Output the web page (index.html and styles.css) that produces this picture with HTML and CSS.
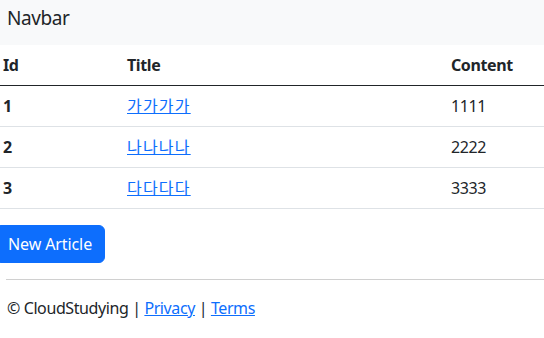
FILE: index.html
```html
<!DOCTYPE html>
<html lang="ko">
  <head>
    <meta charset="UTF-8" />
    <title>Articles</title>
    <link rel="stylesheet" href="styles.css">
  </head>
  <body>
    <header class="navbar">
      <a class="navbar-brand" href="#">Navbar</a>
    </header>

    <main class="container">
      <table class="table">
        <thead>
          <tr>
            <th class="col-id">Id</th>
            <th class="col-title">Title</th>
            <th>Content</th>
          </tr>
        </thead>
        <tbody>
          <tr>
            <th>1</th>
            <td><a class="title-link" href="#">가가가가</a></td>
            <td>1111</td>
          </tr>
          <tr>
            <th>2</th>
            <td><a class="title-link" href="#">나나나나</a></td>
            <td>2222</td>
          </tr>
          <tr>
            <th>3</th>
            <td><a class="title-link" href="#">다다다다</a></td>
            <td>3333</td>
          </tr>
        </tbody>
      </table>

      <a class="btn-primary" href="#">New Article</a>
    </main>

    <footer class="footer">
      &copy; CloudStudying | <a href="#">Privacy</a> | <a href="#">Terms</a>
    </footer>
  </body>
</html>
```

FILE: styles.css
```css
body {
  margin: 0;
  font-family: "Noto Sans", "Noto Sans CJK KR", sans-serif;
  font-size: 16px;
  line-height: 24px;
  letter-spacing: -0.4px;
  color: #212529;
  background-color: #fff;
  overflow: hidden;
}
a {
  color: #0d6efd;
}
.navbar {
  display: flex;
  align-items: flex-start;
  height: 42px;
  padding: 3px 0 0 7px;
  background-color: #f8f9fa;
}
.navbar-brand {
  font-size: 19px;
  line-height: 30px;
  color: #212529;
  text-decoration: none;
}
.container {
  margin-left: -5px;
}
.table {
  width: 549px;
  border-collapse: collapse;
  margin-bottom: 16px;
}
.table th,
.table td {
  padding: 8px;
  text-align: left;
  border-bottom: 1px solid #dee2e6;
}
.table th {
  font-weight: bold;
}
.table thead th {
  border-bottom: 1px solid #212529;
}
.col-id {
  width: 108px;
}
.col-title {
  width: 308px;
}
.title-link {
  letter-spacing: 1.2px;
}
.btn-primary {
  display: inline-block;
  padding: 6px 12px;
  border: 1px solid #0d6efd;
  border-radius: 6px;
  background-color: #0d6efd;
  color: #fff;
  text-decoration: none;
  letter-spacing: -0.1px;
  margin-bottom: 16px;
}
.footer {
  margin-left: 6px;
  padding: 16px 0 0 1px;
  border-top: 1px solid #d0d0d0;
  white-space: nowrap;
}
```
